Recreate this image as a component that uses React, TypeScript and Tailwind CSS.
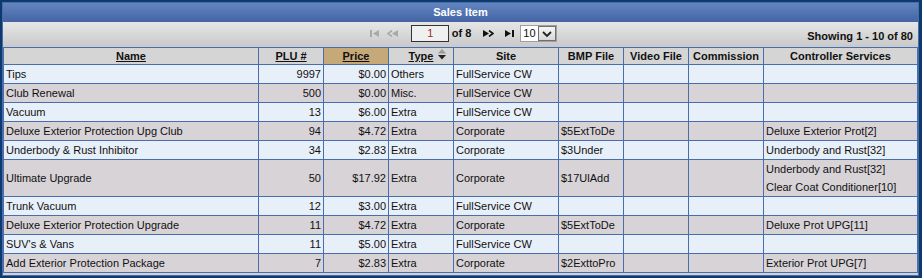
import React from "react";

type Row = {
  name: string;
  plu: string;
  price: string;
  type: string;
  site: string;
  bmp: string;
  services: string[];
};

const rows: Row[] = [
  { name: "Tips", plu: "9997", price: "$0.00", type: "Others", site: "FullService CW", bmp: "", services: [] },
  { name: "Club Renewal", plu: "500", price: "$0.00", type: "Misc.", site: "FullService CW", bmp: "", services: [] },
  { name: "Vacuum", plu: "13", price: "$6.00", type: "Extra", site: "FullService CW", bmp: "", services: [] },
  { name: "Deluxe Exterior Protection Upg Club", plu: "94", price: "$4.72", type: "Extra", site: "Corporate", bmp: "$5ExtToDe", services: ["Deluxe Exterior Prot[2]"] },
  { name: "Underbody & Rust Inhibitor", plu: "34", price: "$2.83", type: "Extra", site: "Corporate", bmp: "$3Under", services: ["Underbody and Rust[32]"] },
  { name: "Ultimate Upgrade", plu: "50", price: "$17.92", type: "Extra", site: "Corporate", bmp: "$17UlAdd", services: ["Underbody and Rust[32]", "Clear Coat Conditioner[10]"] },
  { name: "Trunk Vacuum", plu: "12", price: "$3.00", type: "Extra", site: "FullService CW", bmp: "", services: [] },
  { name: "Deluxe Exterior Protection Upgrade", plu: "11", price: "$4.72", type: "Extra", site: "Corporate", bmp: "$5ExtToDe", services: ["Deluxe Prot UPG[11]"] },
  { name: "SUV's & Vans", plu: "11", price: "$5.00", type: "Extra", site: "FullService CW", bmp: "", services: [] },
  { name: "Add Exterior Protection Package", plu: "7", price: "$2.83", type: "Extra", site: "Corporate", bmp: "$2ExttoPro", services: ["Exterior Prot UPG[7]"] },
];

const cell = "border-r border-[#4a6dad] flex items-center overflow-hidden whitespace-nowrap";

function FirstIcon({ color }: { color: string }) {
  return (
    <svg width="10" height="7" viewBox="0 0 10 7">
      <rect x="0" y="0" width="2" height="7" fill={color} />
      <polygon points="3,3.5 9,0 9,7" fill={color} />
    </svg>
  );
}
function PrevIcon({ color }: { color: string }) {
  return (
    <svg width="12" height="7" viewBox="0 0 12 7">
      <polyline points="5,0.5 1,3.5 5,6.5" fill="none" stroke={color} strokeWidth="1.6" />
      <polygon points="5,3.5 11,0 11,7" fill={color} />
    </svg>
  );
}
function NextIcon({ color }: { color: string }) {
  return (
    <svg width="12" height="7" viewBox="0 0 12 7">
      <polygon points="7,3.5 1,0 1,7" fill={color} />
      <polyline points="7,0.5 11,3.5 7,6.5" fill="none" stroke={color} strokeWidth="1.6" />
    </svg>
  );
}
function LastIcon({ color }: { color: string }) {
  return (
    <svg width="10" height="7" viewBox="0 0 10 7">
      <polygon points="7,3.5 1,0 1,7" fill={color} />
      <rect x="8" y="0" width="2" height="7" fill={color} />
    </svg>
  );
}

export default function App() {
  return (
    <div
      className="w-[922px] h-[278px] bg-[#0d3a6e] pt-[2px] pl-[2px] pr-[3px] pb-[2px] text-[11px] text-[#111]"
      style={{ fontFamily: '"Liberation Sans", Arial, sans-serif' }}
    >
      <div className="h-full border border-[#4a6da8] bg-[#d2d2d2] flex flex-col">
        {/* Title */}
        <div className="h-[19px] shrink-0 bg-gradient-to-b from-[#6285bf] to-[#4464a4] flex items-center justify-center font-bold text-white">
          Sales Item
        </div>
        {/* Toolbar */}
        <div className="h-[25px] shrink-0 bg-gradient-to-b from-[#e6e6e6] to-[#c9c9c9] grid grid-cols-[1fr_auto_1fr]">
          <div />
          <div className="flex items-center pb-[2px] pl-[6px]">
            <FirstIcon color="#a9a9a9" />
            <span className="w-[7px]" />
            <PrevIcon color="#a9a9a9" />
            <span className="w-[12px]" />
            <div className="w-[38px] h-[17px] border border-[#333] bg-[#f0f0f0] flex items-center justify-center text-[#a0282a] text-[11px] pl-[1px]">
              1
            </div>
            <span className="ml-[3px] font-bold">of 8</span>
            <span className="w-[11px]" />
            <NextIcon color="#111" />
            <span className="w-[10px]" />
            <LastIcon color="#111" />
            <span className="w-[6px]" />
            <div className="w-[37px] h-[17px] border border-[#a0a0a0] bg-white flex items-center">
              <span className="pl-[2px] w-[17px] text-[11px]">10</span>
              <div className="w-[18px] h-[15px] border border-[#707070] bg-gradient-to-b from-[#f6f6f6] to-[#d8d8d8] flex items-center justify-center">
                <svg width="10" height="6" viewBox="0 0 10 6">
                  <polyline points="1,1 5,5 9,1" fill="none" stroke="#222" strokeWidth="1.8" />
                </svg>
              </div>
            </div>
          </div>
          <div className="flex items-center justify-end pr-[5px] pt-[4px] font-bold">
            Showing 1 - 10 of 80
          </div>
        </div>
        {/* Table */}
        <div className="border-t border-l border-[#4a6dad] w-[915px]">
          <div className="flex h-[17px] border-b border-[#4a6dad] bg-[#d5d5d5] font-bold">
            <div className={`${cell} w-[255px] justify-center underline`}>Name</div>
            <div className={`${cell} w-[65px] justify-center underline`}>PLU #</div>
            <div className={`${cell} w-[65px] justify-center underline bg-[#c6a978]`}>Price</div>
            <div className={`${cell} w-[65px] justify-center`}>
              <span className="relative underline">
                Type
                <span className="absolute left-full top-[1px] ml-[5px] flex flex-col">
                  <svg width="8" height="11" viewBox="0 0 8 11">
                    <polygon points="4,0 8,4.5 0,4.5" fill="#9a9a9a" />
                    <polygon points="0,6 8,6 4,10.5" fill="#222" />
                  </svg>
                </span>
              </span>
            </div>
            <div className={`${cell} w-[105px] justify-center`}>Site</div>
            <div className={`${cell} w-[65px] justify-center`}>BMP File</div>
            <div className={`${cell} w-[65px] justify-center`}>Video File</div>
            <div className={`${cell} w-[75px] justify-center`}>Commission</div>
            <div className={`${cell} w-[154px] justify-center`}>Controller Services</div>
          </div>
          {rows.map((r, i) => {
            const bg = i % 2 === 0 ? "bg-[#e7eff9]" : "bg-[#d7d3d7]";
            const h = r.services.length > 1 ? "h-[37px]" : "h-[19px]";
            return (
              <div key={i} className={`flex ${h} ${bg} border-b border-[#4a6dad]`}>
                <div className={`${cell} w-[255px] pl-[2px]`}>{r.name}</div>
                <div className={`${cell} w-[65px] justify-end pr-[2px]`}>{r.plu}</div>
                <div className={`${cell} w-[65px] justify-end pr-[2px]`}>{r.price}</div>
                <div className={`${cell} w-[65px] pl-[2px]`}>{r.type}</div>
                <div className={`${cell} w-[105px] pl-[2px]`}>{r.site}</div>
                <div className={`${cell} w-[65px] pl-[2px]`}>{r.bmp}</div>
                <div className={`${cell} w-[65px]`} />
                <div className={`${cell} w-[75px]`} />
                <div className={`${cell} w-[154px] pl-[2px]`}>
                  <div className="flex flex-col">
                    {r.services.map((s, j) => (
                      <div key={j} className="h-[18px] flex items-center">
                        {s}
                      </div>
                    ))}
                  </div>
                </div>
              </div>
            );
          })}
        </div>
      </div>
    </div>
  );
}
